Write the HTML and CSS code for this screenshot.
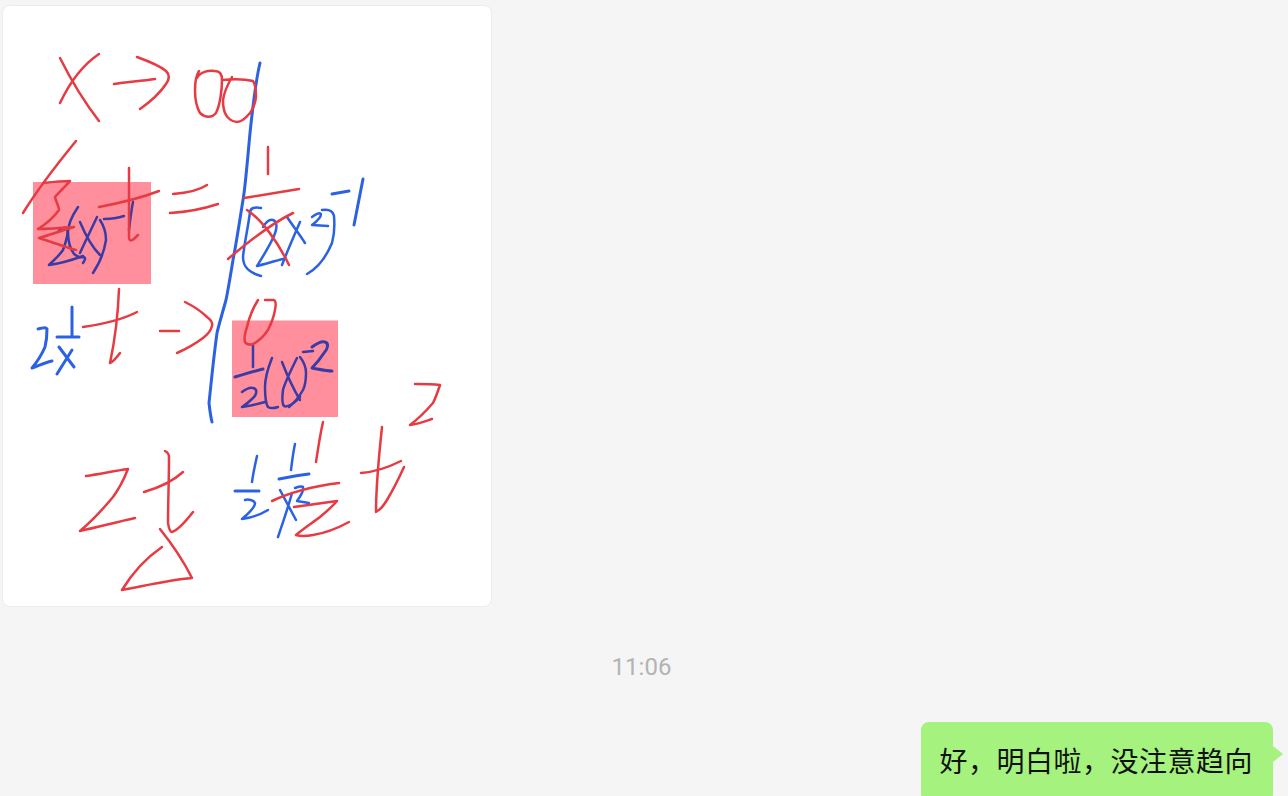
FILE: index.html
```html
<!DOCTYPE html>
<html lang="zh">
<head>
<meta charset="utf-8">
<title>Chat</title>
<link rel="stylesheet" href="styles.css">
</head>
<body>
<main class="chat">
  <div class="photo-row">
    <div class="photo">
      <svg class="sketch" viewBox="3 6 488 600" xmlns="http://www.w3.org/2000/svg" role="img" aria-label="Handwritten maths notes">
        <defs>
          <filter id="soft" x="-5%" y="-5%" width="110%" height="110%"><feGaussianBlur stdDeviation="0.4"/></filter>
        </defs>
        <rect class="mark" x="33" y="182" width="118" height="102"/>
        <rect class="mark" x="232" y="320.5" width="106" height="96.5"/>
        <g filter="url(#soft)">
          <g class="ink blue">
            <path class="thick" d="M260 63C257 75 254 95 250 133C247 165 245 190 243 200C239 225 236 245 233 260C231 272 229 285 226 300C221 318 218 328 217 333C213 362 211 385 209 403C210 412 211 418 212 422"/>
            <path d="M261 208Q251 206 250 212C248 228 244 245 243 257C243 268 250 273 261 276"/>
            <path d="M263 227C266 222 270 219 273 220C278 222 277 229 274 236C269 247 262 258 257 266C265 264 275 261 283 259"/>
            <path d="M287 217C293 226 300 235 305 243M300 222C293 238 287 252 282 265"/>
            <path d="M312 217C316 214 320 212 321 214C321 218 316 222 312 225L328 226"/>
            <path d="M322 210C328 209 333 211 334 216C335 228 334 236 332 243C327 255 318 268 307 274"/>
            <path class="thick" d="M332 194L349 191M363 179C360 195 357 210 354 225"/>
            <path class="thick" d="M72 307L72 335M57 337L79 337"/>
            <path class="thick" d="M38 329C42 328 46 327 47 329C47 336 46 343 45 347C42 354 37 362 32 368C38 366 46 362 52 361"/>
            <path class="thick" d="M59 347L74 367M72 350C67 358 62 366 57 374"/>
            <path d="M257 456C255 465 253 474 252 482"/>
            <path class="thick" d="M235 491L259 491"/>
            <path d="M245 500C248 499 254 500 255 503C255 508 248 514 242 519C250 518 260 515 268 510"/>
            <path d="M295 444C293 453 292 462 291 470"/>
            <path class="thick" d="M279 479C289 477 299 475 309 474"/>
            <path d="M280 490L296 520M292 493C288 508 282 525 278 537"/>
            <path d="M295 488C298 487 302 486 303 487C304 491 300 497 297 501L309 503"/>
          </g>
          <g class="ink dark">
            <path d="M58 232C60 229 64 227 66 228C69 230 68 236 63 250C59 256 53 261 49 265C57 264 72 260 83 256"/>
            <path d="M78 207C72 216 68 224 68 232C68 243 71 250 74 254C78 257 80 258 84 257C86 258 85 260 83 263"/>
            <path d="M80 222C85 234 92 247 100 255M97 217C90 232 84 244 80 253"/>
            <path d="M100 220C104 226 106 234 106 240C104 253 99 264 93 273"/>
            <path d="M104 219C111 219 118 218 124 216M133 202C131 212 130 221 129 230"/>
            <path d="M253 345L253 367"/>
            <path class="thick" d="M235 377C245 374 255 371 263 369"/>
            <path d="M242 392C246 389 250 387 253 388C258 389 257 395 252 399C249 402 245 405 242 407C250 406 258 404 265 402"/>
            <path d="M272 358C268 368 265 378 265 387C265 397 266 404 268 407C271 409 275 408 278 407"/>
            <path d="M282 362C287 375 294 390 300 400M297 358C291 370 285 382 283 390C282 398 282 404 284 406C287 408 295 403 300 397"/>
            <path d="M300 357C304 362 306 368 306 373C306 382 304 388 303 390C299 397 294 403 289 407"/>
            <path d="M303 352L313 351"/>
            <path class="thick" d="M312 347C316 344 322 341 325 342C329 343 328 349 324 353C320 359 316 364 312 368C318 369 326 371 332 371"/>
          </g>
          <g class="ink red">
            <path d="M60 58C72 82 85 103 99 121M99 54C84 64 70 82 60 103"/>
            <path d="M114 84C128 82 142 81 155 79"/>
            <path d="M137 57C148 61 160 66 166 71C170 75 169 80 166 84C160 93 150 102 140 109"/>
            <path d="M199 71C196 76 195 83 195 90C195 100 197 108 200 113C205 118 212 118 216 113C220 105 222 90 222 80C222 74 220 71 215 71C208 70 200 72 197 78"/>
            <path d="M222 80C232 79 245 79 253 81C256 85 256 92 256 97C255 104 253 109 250 113C245 119 241 122 237 122C232 122 227 118 225 113C223 108 223 104 223 100C224 92 228 84 232 77"/>
            <path d="M76 141C58 163 39 187 23 213"/>
            <path d="M43 183C52 182 62 181 70 181C66 186 60 191 55 197C56 202 59 206 59 210C54 217 46 224 38 229C50 229 62 228 74 227C63 230 50 235 39 238C52 242 65 247 76 250"/>
            <path d="M129 168L129 238C130 243 133 240 138 235M99 207C120 203 141 198 159 191"/>
            <path d="M173 194C186 193 198 191 207 185M170 213C187 212 203 209 218 204"/>
            <path d="M268 147L268 174M244 198C262 195 280 192 299 189"/>
            <path d="M247 210C262 220 278 242 289 265M228 259C248 242 270 224 293 213"/>
            <path d="M119 289C118 315 115 340 110 363C113 362 117 357 120 353M83 327C103 324 122 320 137 312"/>
            <path d="M160 331L179 331"/>
            <path d="M185 302C193 306 201 311 207 317C211 320 213 323 212 326C211 330 207 335 203 338C195 344 186 349 177 353"/>
            <path d="M258 300C253 308 249 318 247 327C245 333 244 339 245 342C247 345 250 345 253 344C259 341 264 336 268 330C271 324 274 316 275 310C276 305 276 301 274 300L265 300"/>
            <path d="M86 476C100 474 114 471 128 469C124 479 119 489 113 497C103 509 92 521 80 531C98 527 117 522 135 518"/>
            <path d="M165 451C167 452 169 454 169 457C169 480 168 503 168 523C169 529 170 532 172 532C178 530 186 521 193 512M144 492C158 488 172 482 183 472"/>
            <path d="M160 529C172 544 184 562 192 578C168 580 144 586 122 590C133 572 146 558 162 547"/>
            <path d="M323 422C320 435 318 449 316 462"/>
            <path d="M272 501C291 492 315 486 339 483"/>
            <path d="M294 507C308 505 323 503 337 501C332 507 326 512 320 517C312 523 303 529 296 535C302 537 308 536 313 535C326 533 338 528 349 522"/>
            <path d="M382 427C379 455 376 485 376 512C380 510 384 505 387 500C393 490 399 478 404 467M361 473C375 472 389 467 401 461"/>
            <path d="M415 384C423 384 432 384 440 385C438 391 436 397 433 403C426 411 418 419 410 425C418 424 426 421 432 419"/>
          </g>
        </g>
      </svg>
    </div>
  </div>
  <div class="timestamp">11:06</div>
  <div class="message-row">
    <div class="bubble">好，明白啦，没注意趋向</div>
  </div>
</main>
</body>
</html>
```
FILE: styles.css
```css
html, body {
  margin: 0;
  height: 796px;
  overflow: hidden;
  background: #f5f5f5;
}

.chat {
  display: flex;
  flex-direction: column;
  padding: 5px 15px 0 2px;
  font-family: "Roboto", "Noto Sans CJK SC", sans-serif;
}

.photo {
  box-sizing: border-box;
  width: 490px;
  height: 602px;
  background: #fff;
  border: 1px solid #ececec;
  border-radius: 8px;
  overflow: hidden;
}

.sketch {
  display: block;
  width: 488px;
  height: 600px;
}

.mark { fill: #ff8f9c; }

.ink path {
  fill: none;
  stroke-width: 2.5;
  stroke-linecap: round;
  stroke-linejoin: round;
}

.ink path.thick { stroke-width: 3; }

.red path { stroke: #e63b42; }
.blue path { stroke: #2b62e3; }
.dark path { stroke: #3b3ba6; }

.timestamp {
  margin-top: 46px;
  margin-left: 8px;
  height: 28px;
  line-height: 28px;
  text-align: center;
  font-size: 24px;
  color: #b3b3b3;
}

.message-row {
  display: flex;
  justify-content: flex-end;
  margin-top: 41px;
}

.bubble {
  position: relative;
  padding: 18px 20px 22px 18px;
  background: #a5f27f;
  border-radius: 8px;
  font-family: "Noto Sans CJK SC", sans-serif;
  font-size: 28px;
  letter-spacing: 0.5px;
  line-height: 40px;
  color: #111;
  white-space: nowrap;
}

.bubble::after {
  content: "";
  position: absolute;
  top: 24px;
  right: -10px;
  border-style: solid;
  border-width: 8px 0 8px 10px;
  border-color: transparent transparent transparent #a5f27f;
}
```
